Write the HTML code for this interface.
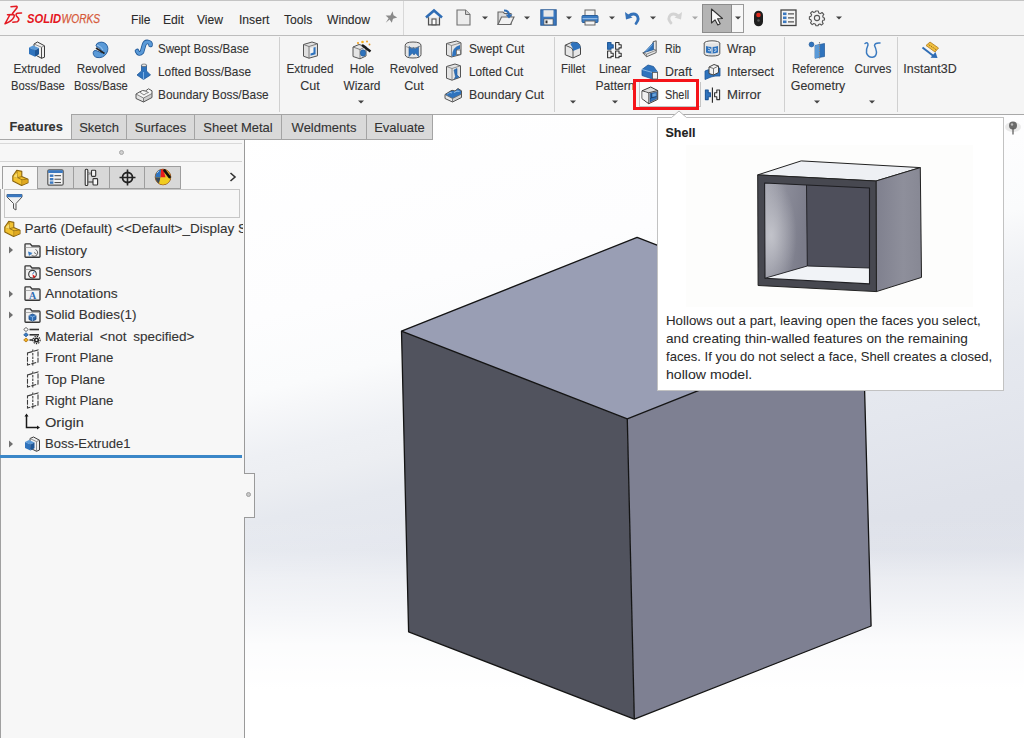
<!DOCTYPE html>
<html><head><meta charset="utf-8"><style>*{margin:0;padding:0;box-sizing:border-box}
html,body{width:1024px;height:738px;overflow:hidden;background:#f3f3f3;font-family:"Liberation Sans",sans-serif;color:#333}
.a{position:absolute}
.t{position:absolute;white-space:nowrap;line-height:1;-webkit-text-stroke:0.1px currentColor}
svg{overflow:visible}
</style></head><body>
<div class="a" style="left:0px;top:0px;width:1024px;height:738px;background:#f5f5f5"></div>
<div class="a" style="left:0px;top:0px;width:1024px;height:1px;background:#c4c4c4"></div>
<div class="a" style="left:0px;top:35px;width:1024px;height:1px;background:#bdbdbd"></div>
<div class="a" style="left:71px;top:114px;width:953px;height:1px;background:#a8a8a8"></div>
<div class="a" style="left:245px;top:115px;width:779px;height:623px;background:linear-gradient(to bottom,rgba(255,255,255,0) 400px,rgba(255,255,255,0.08) 435px,rgba(255,255,255,0.42) 465px,rgba(255,255,255,0.52) 480px,rgba(255,255,255,0.9) 530px,#fff 575px),linear-gradient(166.5deg,#fff 0px,#fdfdfe 200px,#fafbfc 272px,#f6f7f9 293px,#eef0f4 335px,#eceef2 364px,#e6e9ef 398px,#e4e7ee 443px,#dfe2ea 540px,#dcdfe8 788px)"></div>
<div class="t" style="left:131px;top:13.68px;font-size:12.9px;transform:scaleX(0.94);transform-origin:0 0;color:#2a2a2a;">File</div>
<div class="t" style="left:163px;top:13.68px;font-size:12.9px;transform:scaleX(0.94);transform-origin:0 0;color:#2a2a2a;">Edit</div>
<div class="t" style="left:197px;top:13.68px;font-size:12.9px;transform:scaleX(0.94);transform-origin:0 0;color:#2a2a2a;">View</div>
<div class="t" style="left:238.5px;top:13.68px;font-size:12.9px;transform:scaleX(0.94);transform-origin:0 0;color:#2a2a2a;">Insert</div>
<div class="t" style="left:284px;top:13.68px;font-size:12.9px;transform:scaleX(0.94);transform-origin:0 0;color:#2a2a2a;">Tools</div>
<div class="t" style="left:326.5px;top:13.68px;font-size:12.9px;transform:scaleX(0.94);transform-origin:0 0;color:#2a2a2a;">Window</div>
<div class="a" style="left:403px;top:1px;width:1px;height:34px;background:#d8d8d8"></div>
<div class="t" style="left:-63px;width:200px;text-align:center;top:63.16px;font-size:12.8px;transform:scaleX(0.918);color:#333;">Extruded</div>
<div class="t" style="left:-62.5px;width:200px;text-align:center;top:80.06px;font-size:12.8px;transform:scaleX(0.879);color:#333;">Boss/Base</div>
<div class="t" style="left:1px;width:200px;text-align:center;top:63.16px;font-size:12.8px;transform:scaleX(0.908);color:#333;">Revolved</div>
<div class="t" style="left:1px;width:200px;text-align:center;top:80.06px;font-size:12.8px;transform:scaleX(0.879);color:#333;">Boss/Base</div>
<div class="t" style="left:158px;top:43.36px;font-size:12.8px;transform:scaleX(0.907);transform-origin:0 0;color:#333;">Swept Boss/Base</div>
<div class="t" style="left:158px;top:65.96px;font-size:12.8px;transform:scaleX(0.927);transform-origin:0 0;color:#333;">Lofted Boss/Base</div>
<div class="t" style="left:158px;top:88.96px;font-size:12.8px;transform:scaleX(0.926);transform-origin:0 0;color:#333;">Boundary Boss/Base</div>
<div class="a" style="left:279px;top:37px;width:1px;height:75px;background:#d0d0d0"></div>
<div class="t" style="left:209.5px;width:200px;text-align:center;top:63.16px;font-size:12.8px;transform:scaleX(0.918);color:#333;">Extruded</div>
<div class="t" style="left:209.5px;width:200px;text-align:center;top:80.06px;font-size:12.8px;transform:scaleX(0.98);color:#333;">Cut</div>
<div class="t" style="left:261.5px;width:200px;text-align:center;top:63.16px;font-size:12.8px;transform:scaleX(0.922);color:#333;">Hole</div>
<div class="t" style="left:261.5px;width:200px;text-align:center;top:80.06px;font-size:12.8px;transform:scaleX(0.927);color:#333;">Wizard</div>
<svg class="a" style="left:358px;top:100px" width="6" height="4" viewBox="0 0 6 4"><path d="M0 0.5H6L3 3.5Z" fill="#444"/></svg>
<div class="t" style="left:313.5px;width:200px;text-align:center;top:63.16px;font-size:12.8px;transform:scaleX(0.908);color:#333;">Revolved</div>
<div class="t" style="left:313.5px;width:200px;text-align:center;top:80.06px;font-size:12.8px;transform:scaleX(0.98);color:#333;">Cut</div>
<div class="t" style="left:468.5px;top:43.36px;font-size:12.8px;transform:scaleX(0.937);transform-origin:0 0;color:#333;">Swept Cut</div>
<div class="t" style="left:468.5px;top:65.96px;font-size:12.8px;transform:scaleX(0.92);transform-origin:0 0;color:#333;">Lofted Cut</div>
<div class="t" style="left:468.5px;top:88.96px;font-size:12.8px;transform:scaleX(0.958);transform-origin:0 0;color:#333;">Boundary Cut</div>
<div class="a" style="left:554px;top:37px;width:1px;height:75px;background:#d0d0d0"></div>
<div class="t" style="left:473px;width:200px;text-align:center;top:63.16px;font-size:12.8px;transform:scaleX(0.896);color:#333;">Fillet</div>
<svg class="a" style="left:569.5px;top:100px" width="6" height="4" viewBox="0 0 6 4"><path d="M0 0.5H6L3 3.5Z" fill="#444"/></svg>
<div class="t" style="left:514.5px;width:200px;text-align:center;top:63.16px;font-size:12.8px;transform:scaleX(0.904);color:#333;">Linear</div>
<div class="t" style="left:514.5px;width:200px;text-align:center;top:80.06px;font-size:12.8px;transform:scaleX(0.944);color:#333;">Pattern</div>
<svg class="a" style="left:611.5px;top:100px" width="6" height="4" viewBox="0 0 6 4"><path d="M0 0.5H6L3 3.5Z" fill="#444"/></svg>
<div class="t" style="left:665px;top:43.36px;font-size:12.8px;transform:scaleX(0.833);transform-origin:0 0;color:#333;">Rib</div>
<div class="t" style="left:665px;top:65.96px;font-size:12.8px;transform:scaleX(0.968);transform-origin:0 0;color:#333;">Draft</div>
<div class="t" style="left:727px;top:43.36px;font-size:12.8px;transform:scaleX(0.951);transform-origin:0 0;color:#333;">Wrap</div>
<div class="t" style="left:727px;top:65.96px;font-size:12.8px;transform:scaleX(0.955);transform-origin:0 0;color:#333;">Intersect</div>
<div class="t" style="left:727px;top:88.96px;font-size:12.8px;transform:scaleX(1.024);transform-origin:0 0;color:#333;">Mirror</div>
<div class="a" style="left:784px;top:37px;width:1px;height:75px;background:#d0d0d0"></div>
<div class="t" style="left:717.5px;width:200px;text-align:center;top:63.16px;font-size:12.8px;transform:scaleX(0.883);color:#333;">Reference</div>
<div class="t" style="left:717.5px;width:200px;text-align:center;top:80.06px;font-size:12.8px;transform:scaleX(0.97);color:#333;">Geometry</div>
<svg class="a" style="left:814px;top:100px" width="6" height="4" viewBox="0 0 6 4"><path d="M0 0.5H6L3 3.5Z" fill="#444"/></svg>
<div class="t" style="left:772.5px;width:200px;text-align:center;top:63.16px;font-size:12.8px;transform:scaleX(0.909);color:#333;">Curves</div>
<svg class="a" style="left:869px;top:100px" width="6" height="4" viewBox="0 0 6 4"><path d="M0 0.5H6L3 3.5Z" fill="#444"/></svg>
<div class="a" style="left:897px;top:37px;width:1px;height:75px;background:#d0d0d0"></div>
<div class="t" style="left:830px;width:200px;text-align:center;top:63.16px;font-size:12.8px;transform:scaleX(0.974);color:#333;">Instant3D</div>
<div class="a" style="left:639px;top:82px;width:62px;height:25px;border:1px solid #c4c4c4;border-top:none;background:#fdfdfd"></div>
<div class="a" style="left:633px;top:79px;width:66px;height:31px;border:3px solid #f5141a;background:transparent"></div>
<div class="t" style="left:665px;top:88.96px;font-size:12.8px;transform:scaleX(0.853);transform-origin:0 0;color:#333;">Shell</div>
<div class="a" style="left:0px;top:139px;width:245px;height:1px;background:#a8a8a8"></div>
<div class="t" style="left:9.5px;top:121.06px;font-size:12.8px;font-weight:700;color:#333;">Features</div>
<div class="a" style="left:71px;top:114px;width:56px;height:26px;background:#d9d9d9;border:1px solid #a4a4a4"></div>
<div class="t" style="left:-1.0px;width:200px;text-align:center;top:120.89px;font-size:13px;color:#333;">Sketch</div>
<div class="a" style="left:126px;top:114px;width:69px;height:26px;background:#d9d9d9;border:1px solid #a4a4a4"></div>
<div class="t" style="left:60.5px;width:200px;text-align:center;top:120.89px;font-size:13px;color:#333;">Surfaces</div>
<div class="a" style="left:194px;top:114px;width:88px;height:26px;background:#d9d9d9;border:1px solid #a4a4a4"></div>
<div class="t" style="left:138.0px;width:200px;text-align:center;top:120.89px;font-size:13px;color:#333;">Sheet Metal</div>
<div class="a" style="left:281px;top:114px;width:86px;height:26px;background:#d9d9d9;border:1px solid #a4a4a4"></div>
<div class="t" style="left:224.0px;width:200px;text-align:center;top:120.89px;font-size:13px;color:#333;">Weldments</div>
<div class="a" style="left:366px;top:114px;width:67px;height:26px;background:#d9d9d9;border:1px solid #a4a4a4"></div>
<div class="t" style="left:299.5px;width:200px;text-align:center;top:120.89px;font-size:13px;color:#333;">Evaluate</div>
<div class="a" style="left:0px;top:140px;width:244px;height:598px;background:#f7f7f7"></div>
<div class="a" style="left:244px;top:139px;width:1px;height:599px;background:#9a9a9a"></div>
<div class="a" style="left:0px;top:143px;width:242px;height:1px;background:#d9d9d9"></div>
<div class="a" style="left:0px;top:161px;width:242px;height:1px;background:#d4d4d4"></div>
<div class="a" style="left:118.5px;top:149.5px;width:5px;height:5px;border-radius:50%;background:#d0d0d0;border:1px solid #a8a8a8"></div>
<div class="a" style="left:2px;top:166px;width:178px;height:1px;background:#9e9e9e"></div>
<div class="a" style="left:37px;top:166px;width:37px;height:23px;background:#d8d8d8;border:1px solid #9e9e9e"></div>
<div class="a" style="left:73px;top:166px;width:37px;height:23px;background:#d8d8d8;border:1px solid #9e9e9e"></div>
<div class="a" style="left:109px;top:166px;width:37px;height:23px;background:#d8d8d8;border:1px solid #9e9e9e"></div>
<div class="a" style="left:144px;top:166px;width:37px;height:23px;background:#d8d8d8;border:1px solid #9e9e9e"></div>
<div class="a" style="left:2px;top:166px;width:1px;height:23px;background:#9e9e9e"></div>
<div class="a" style="left:37px;top:188px;width:144px;height:1px;background:#9e9e9e"></div>
<svg class="a" style="left:229px;top:172px" width="8" height="10" viewBox="0 0 8 10"><path d="M1.5 1L6 5L1.5 9" fill="none" stroke="#333" stroke-width="1.6"/></svg>
<div class="a" style="left:4px;top:189px;width:236px;height:29px;border:1px solid #c6c6c6;background:#f7f7f7"></div>
<div class="a" style="left:0px;top:189px;width:1px;height:549px;background:#a0a0a0"></div>
<div class="t" style="left:24.5px;top:222.37px;font-size:13.5px;color:#333;width:218px;height:16px;overflow:hidden">Part6 (Default) &lt;&lt;Default&gt;_Display States</div>
<div class="t" style="left:45px;top:243.77px;font-size:13.5px;transform:scaleX(1);transform-origin:0 0;color:#333;">History</div>
<div class="t" style="left:45px;top:265.27px;font-size:13.5px;transform:scaleX(0.94);transform-origin:0 0;color:#333;">Sensors</div>
<div class="t" style="left:45px;top:286.77px;font-size:13.5px;transform:scaleX(1.02);transform-origin:0 0;color:#333;">Annotations</div>
<div class="t" style="left:45px;top:308.27px;font-size:13.5px;transform:scaleX(1);transform-origin:0 0;color:#333;">Solid Bodies(1)</div>
<div class="t" style="left:45px;top:329.77px;font-size:13.5px;transform:scaleX(1);transform-origin:0 0;color:#333;word-spacing:3px">Material &lt;not specified&gt;</div>
<div class="t" style="left:45px;top:351.27px;font-size:13.5px;transform:scaleX(0.98);transform-origin:0 0;color:#333;">Front Plane</div>
<div class="t" style="left:45px;top:372.77px;font-size:13.5px;transform:scaleX(1);transform-origin:0 0;color:#333;">Top Plane</div>
<div class="t" style="left:45px;top:394.27px;font-size:13.5px;transform:scaleX(0.98);transform-origin:0 0;color:#333;">Right Plane</div>
<div class="t" style="left:45px;top:415.77px;font-size:13.5px;transform:scaleX(1.08);transform-origin:0 0;color:#333;">Origin</div>
<div class="t" style="left:45px;top:437.27px;font-size:13.5px;transform:scaleX(0.965);transform-origin:0 0;color:#333;">Boss-Extrude1</div>
<div class="a" style="left:0px;top:455px;width:242px;height:3px;background:#3b87c8"></div>
<div class="a" style="left:244px;top:473px;width:11px;height:45px;background:#f7f7f7;border:1px solid #9a9a9a;border-left:none"></div>
<div class="a" style="left:246px;top:492px;width:5px;height:5px;border-radius:50%;background:#c8c8c8;border:1px solid #a0a0a0"></div>
<svg class="a" style="left:245px;top:115px" width="779" height="623" viewBox="0 0 779 623">
<polygon points="156.5,216.1 392.1,122.35 617.8,210.15 382.3,303.9" fill="#999eb4"/>
<polygon points="156.5,216.1 382.3,303.9 389.3,604.1 163.6,516.8" fill="#51535e"/>
<polygon points="382.3,303.9 617.8,210.15 626.1,511 389.3,604.1" fill="#7e8092"/>
<g fill="none" stroke="#141414" stroke-width="1.3" stroke-linejoin="round">
<polygon points="156.5,216.1 392.1,122.35 617.8,210.15 626.1,511 389.3,604.1 163.6,516.8"/>
<polyline points="156.5,216.1 382.3,303.9 617.8,210.15"/>
<line x1="382.3" y1="303.9" x2="389.3" y2="604.1"/>
</g></svg>
<div class="a" style="left:657px;top:117px;width:347px;height:274px;background:#fff;border:1px solid #c2c2c2"></div>
<svg class="a" style="left:671px;top:110px" width="16" height="9" viewBox="0 0 16 9"><path d="M0 8 L8 1 L16 8" fill="#fff" stroke="#b8b8b8" stroke-width="1"/><rect x="0.5" y="7.5" width="15" height="2" fill="#fff"/></svg>
<div class="t" style="left:665.5px;top:126.92px;font-size:12.5px;font-weight:700;color:#222;">Shell</div>
<div class="a" style="left:686px;top:145px;width:287px;height:162px;background:#fdfdfc"></div>
<div class="t" style="left:665.8px;top:314.07px;font-size:13.5px;transform:scaleX(0.987);transform-origin:0 0;color:#2a2a2a;-webkit-text-stroke:0.05px">Hollows out a part, leaving open the faces you select,</div>
<div class="t" style="left:665.8px;top:332.07px;font-size:13.5px;transform:scaleX(1.008);transform-origin:0 0;color:#2a2a2a;-webkit-text-stroke:0.05px">and creating thin-walled features on the remaining</div>
<div class="t" style="left:665.8px;top:349.87px;font-size:13.5px;transform:scaleX(0.968);transform-origin:0 0;color:#2a2a2a;-webkit-text-stroke:0.05px">faces. If you do not select a face, Shell creates a closed,</div>
<div class="t" style="left:665.8px;top:367.57px;font-size:13.5px;transform:scaleX(1.045);transform-origin:0 0;color:#2a2a2a;-webkit-text-stroke:0.05px">hollow model.</div>
<svg class="a" style="left:3px;top:5px" width="21" height="21" viewBox="0 0 21 21"><g fill="none" stroke="#e41b23" stroke-width="1.55" stroke-linecap="round" stroke-linejoin="round">
<path d="M8 1.8 L13.6 1.3 Q14.6 1.6 13.8 3 L9.5 8.5"/>
<path d="M4.5 9.8 L10.2 9.6 Q12 10 10.8 12.4 Q9 16 2 18.8 L6.5 10.5"/>
<path d="M18.5 8 L14.5 8.3 Q12.2 9 13.5 11 L15.6 13.6 Q16.4 15.6 14.2 16.8 L9.8 17.2"/>
</g></svg>
<svg class="a" style="left:27px;top:11px" width="75" height="14" viewBox="0 0 75 14"><text x="0" y="12" font-family="Liberation Sans" font-weight="700" font-style="italic" font-size="12.3" fill="#e4161e" textLength="34.2" lengthAdjust="spacingAndGlyphs">SOLID</text><text x="34.6" y="12" font-family="Liberation Sans" font-style="italic" font-size="12.3" fill="#d65a3a" textLength="38.5" lengthAdjust="spacingAndGlyphs" stroke="#d65a3a" stroke-width="0.25">WORKS</text></svg>
<svg class="a" style="left:384px;top:10px" width="14" height="14" viewBox="0 0 14 14"><path d="M8.6 1.2 L9.5 5.2 L13.2 7.4 L9 8.8 L7.8 12.8 L5.6 9.6 L1.8 12.8 L4.6 8.2 L1.6 5.4 L6.4 5.6 Z" fill="#8a8a8a"/></svg>
<svg class="a" style="left:425px;top:9px" width="18" height="17" viewBox="0 0 18 17"><path d="M1 8.5 L9 1.5 L17 8.5" fill="none" stroke="#2f6db5" stroke-width="2.6" stroke-linejoin="miter"/>
<path d="M3.5 8.3 V15.8 H14.5 V8.3" fill="#e8e8e8" stroke="#505050" stroke-width="1.2"/>
<rect x="7" y="10" width="4" height="5.8" fill="#fff" stroke="#505050" stroke-width="1.1"/></svg>
<svg class="a" style="left:456px;top:9px" width="15" height="17" viewBox="0 0 15 17"><path d="M1 1 H9.5 L14 5.5 V16 H1 Z" fill="#ececec" stroke="#707070" stroke-width="1.1"/><path d="M9.5 1 V5.5 H14" fill="#d0d0d0" stroke="#707070" stroke-width="1"/></svg>
<svg class="a" style="left:481.5px;top:15.5px" width="6" height="4" viewBox="0 0 6 4"><path d="M0 0.5H6L3 3.5Z" fill="#444"/></svg>
<svg class="a" style="left:497px;top:9px" width="18" height="17" viewBox="0 0 18 17"><path d="M1 3 H6 L7.5 4.5 H14 V15.5 H1 Z" fill="#dcdcdc" stroke="#666" stroke-width="1.1"/>
<path d="M1 15.5 L4.5 8 H17 L13.5 15.5 Z" fill="#f2f2f2" stroke="#666" stroke-width="1.1"/>
<path d="M7 1.5 Q12 1.5 12 6" fill="none" stroke="#2f6db5" stroke-width="2"/><path d="M8.5 5.5 H15.5 L12 9.5 Z" fill="#2f6db5"/></svg>
<svg class="a" style="left:524px;top:15.5px" width="6" height="4" viewBox="0 0 6 4"><path d="M0 0.5H6L3 3.5Z" fill="#444"/></svg>
<svg class="a" style="left:540px;top:9px" width="17" height="17" viewBox="0 0 17 17"><rect x="0.8" y="0.8" width="15.4" height="15.4" fill="#3a78c0" stroke="#2a5a95" stroke-width="1"/>
<rect x="3.5" y="1.2" width="10" height="6.5" fill="#e8e8e8"/>
<rect x="4" y="10" width="9" height="5.8" fill="#f4f4f4" stroke="#555" stroke-width="0.6"/><rect x="5.5" y="11.5" width="2" height="2.8" fill="#333"/></svg>
<svg class="a" style="left:566px;top:15.5px" width="6" height="4" viewBox="0 0 6 4"><path d="M0 0.5H6L3 3.5Z" fill="#444"/></svg>
<svg class="a" style="left:581px;top:9px" width="18" height="17" viewBox="0 0 18 17"><rect x="4" y="1" width="10" height="6" fill="#f2f2f2" stroke="#666" stroke-width="1"/>
<rect x="1" y="6.5" width="16" height="7" rx="1" fill="#3a7cc4" stroke="#2a5e9a" stroke-width="1"/>
<rect x="1.5" y="9" width="15" height="1.2" fill="#8fb8e4"/>
<rect x="4" y="12" width="10" height="4" fill="#f4f4f4" stroke="#666" stroke-width="1"/></svg>
<svg class="a" style="left:608.5px;top:15.5px" width="6" height="4" viewBox="0 0 6 4"><path d="M0 0.5H6L3 3.5Z" fill="#444"/></svg>
<svg class="a" style="left:624px;top:10px" width="17" height="15" viewBox="0 0 17 15"><path d="M4.5 6 Q9 2.5 12.5 5 Q16 8.5 12 13.5" fill="none" stroke="#3572b9" stroke-width="2.8" stroke-linecap="round"/><path d="M1 2 L2 9.5 L8.5 7.5 Z" fill="#3572b9"/></svg>
<svg class="a" style="left:649.7px;top:15.5px" width="6" height="4" viewBox="0 0 6 4"><path d="M0 0.5H6L3 3.5Z" fill="#444"/></svg>
<svg class="a" style="left:666px;top:10px" width="17" height="15" viewBox="0 0 17 15"><path d="M12.5 6 Q8 2.5 4.5 5 Q1 8.5 5 13" fill="none" stroke="#d3d3d3" stroke-width="2.8" stroke-linecap="round"/><path d="M16 2 L15 9.5 L8.5 7.5 Z" fill="#d3d3d3"/></svg>
<svg class="a" style="left:692.4px;top:15.5px" width="6" height="4" viewBox="0 0 6 4"><path d="M0 0.5H6L3 3.5Z" fill="#a8a8a8"/></svg>
<div class="a" style="left:702px;top:4px;width:42px;height:29px;background:#f7f7f7;border:1px solid #9a9a9a"></div>
<div class="a" style="left:702px;top:4px;width:30px;height:29px;background:#b4b4b4;border:1px solid #8c8c8c"></div>
<svg class="a" style="left:710px;top:8px" width="14" height="18" viewBox="0 0 14 18"><path d="M1.5 1 V15 L5 11.8 L7.8 17 L10.2 15.8 L7.6 10.8 L12.5 10.5 Z" fill="#f8f8f8" stroke="#333" stroke-width="1.1" stroke-linejoin="round"/></svg>
<svg class="a" style="left:734.5px;top:15.5px" width="6" height="4" viewBox="0 0 6 4"><path d="M0 0.5H6L3 3.5Z" fill="#444"/></svg>
<svg class="a" style="left:753px;top:10px" width="11" height="17" viewBox="0 0 11 17"><rect x="1" y="0.8" width="9" height="15.4" rx="4.5" fill="#1e1e1e"/><circle cx="5.5" cy="5" r="2.3" fill="#e02a1e"/><circle cx="5.5" cy="10.5" r="1.3" fill="#555"/></svg>
<svg class="a" style="left:780px;top:9px" width="17" height="17" viewBox="0 0 17 17"><rect x="1" y="1" width="15" height="15.5" fill="#f4f4f4" stroke="#444" stroke-width="1.3"/>
<rect x="3" y="3.5" width="3.5" height="2.6" fill="#3a78c0"/><rect x="3" y="7.5" width="3.5" height="2.6" fill="#3a78c0"/><rect x="3" y="11.5" width="3.5" height="2.6" fill="#3a78c0"/>
<path d="M8 4.8 H14 M8 8.8 H14 M8 12.8 H14" stroke="#555" stroke-width="1.2"/></svg>
<svg class="a" style="left:809px;top:10px" width="16" height="16" viewBox="0 0 16 16"><g transform="translate(8 8)"><path d="M-1.3 -7 H1.3 L1.7 -5.1 L3.4 -4.4 L5 -5.5 L6.8 -3.6 L5.7 -2 L6.3 -0.3 L7.5 0 V2 L5.9 2.2 L5.3 4 L6.2 5.5 L4.4 7.1 L3 6 L1.4 6.6 L1.2 7.7 H-1.2 L-1.5 6.2 L-3.2 5.5 L-4.8 6.6 L-6.5 4.8 L-5.5 3.2 L-6.2 1.6 L-7.6 1.3 V-1.2 L-6.1 -1.6 L-5.4 -3.3 L-6.5 -4.8 L-4.7 -6.6 L-3.2 -5.5 L-1.6 -6.2 Z" fill="#f2f2f2" stroke="#555" stroke-width="1.1" stroke-linejoin="round"/><circle r="2.6" fill="#f2f2f2" stroke="#555" stroke-width="1.1"/></g></svg>
<svg class="a" style="left:835.5px;top:15.5px" width="6" height="4" viewBox="0 0 6 4"><path d="M0 0.5H6L3 3.5Z" fill="#444"/></svg>
<svg class="a" style="left:28px;top:41px" width="18" height="18" viewBox="0 0 18 18"><path d="M6 3 L9.5 1 L16.5 4.8 V16.2 L13.5 17.3 L6 13.2 Z" fill="#f0f0f0" stroke="#3a3a3a" stroke-width="1"/>
<path d="M13.5 6.2 V17.3" stroke="#3a3a3a" stroke-width="0.9"/><path d="M6 3 L13.5 6.2 L16.5 4.8" fill="none" stroke="#777" stroke-width="0.8"/>
<path d="M1 6.5 L5 4.5 L11 7 L7 9.2 Z" fill="#5a9ad8"/><path d="M1 6.5 L7 9.2 V15.8 L1 13 Z" fill="#2f73bd"/><path d="M7 9.2 L11 7 V13.3 L7 15.8 Z" fill="#1f5797"/></svg>
<svg class="a" style="left:92px;top:41px" width="17" height="18" viewBox="0 0 17 18"><path d="M5 2.5 Q10 -0.5 14 3 Q17.5 7 14.5 12.5 Q11 17.5 5 16.5 Q1 15.5 1.2 11.5 Q1.5 9 4 9.5 L10 12 Q8 6 5 6 Q3 4.5 5 2.5 Z" fill="#5a9ad8" stroke="#1f5797" stroke-width="0.9"/>
<path d="M4 7 L12.5 12.5" stroke="#222" stroke-width="1.6"/><path d="M5 4 Q9 5 11 9" fill="none" stroke="#9cc6ee" stroke-width="1"/></svg>
<svg class="a" style="left:135px;top:40px" width="18" height="17" viewBox="0 0 18 17"><path d="M2 11 Q4 15.5 7 12 L9 5 Q10 1.5 13 2 Q16 2.5 15.5 5" fill="none" stroke="#1f5797" stroke-width="4.6" stroke-linecap="round"/><path d="M2 11 Q4 15.5 7 12 L9 5 Q10 1.5 13 2 Q16 2.5 15.5 5" fill="none" stroke="#5a9ad8" stroke-width="3" stroke-linecap="round"/></svg>
<svg class="a" style="left:136px;top:63px" width="16" height="17" viewBox="0 0 16 17"><path d="M5.5 2 V8 L1 12 L7.5 16.5 L14.5 12 L10.5 8 V2 Z" fill="#2f73bd" stroke="#1f5797" stroke-width="0.8"/><ellipse cx="8" cy="2.3" rx="2.6" ry="1.3" fill="#e8e8e8" stroke="#666" stroke-width="0.7"/><path d="M7.5 16.5 V9" stroke="#7fb2e6" stroke-width="1"/></svg>
<svg class="a" style="left:135px;top:86px" width="18" height="17" viewBox="0 0 18 17"><path d="M1 8 L8.5 12 V16 L1 12.5 Z" fill="#e4e4e4"/><path d="M8.5 12 L17 7.5 V11.5 L8.5 16 Z" fill="#cfcfcf"/>
<path d="M1 8 L4.5 6 Q7.5 3.5 10.5 5 L13.5 2.8 L17 4.8 V7.5 L8.5 12 Z" fill="#f6f6f6"/>
<path d="M1 8 L4.5 6 Q7.5 3.5 10.5 5 L13.5 2.8 L17 4.8 V11.5 L8.5 16 L1 12.5 Z" fill="none" stroke="#555" stroke-width="1" stroke-linejoin="round"/>
<path d="M1 8 L8.5 12 L17 7.5 M8.5 12 V16 M4.5 6 L9 9 Q11 7 13.5 6.5 M10.5 5 L13.5 6.5" fill="none" stroke="#666" stroke-width="0.8"/></svg>
<svg class="a" style="left:302px;top:41px" width="17" height="18" viewBox="0 0 17 18"><path d="M1.5 3.5 L10 1 L15.5 2.8 V14.8 L7 17.2 L1.5 15.2 Z" fill="#e0e0e0" stroke="#555" stroke-width="1"/>
<path d="M1.5 3.5 L7 5.5 L15.5 2.8 M7 5.5 V17.2" fill="none" stroke="#666" stroke-width="0.8"/>
<path d="M8.2 7.2 L14 5.6 V13.6 L8.2 15.4 Z" fill="#f4f4f4"/><path d="M11.5 6.5 V11.5 L8.5 12.5 V14.8 L13.6 13.3 V6 Z" fill="#2f73bd"/></svg>
<svg class="a" style="left:352px;top:40px" width="20" height="20" viewBox="0 0 20 20"><path d="M1 7 L7 4.5 L14 6.5 V16 L8 18.8 L1 16.5 Z" fill="#e4e4e4" stroke="#555" stroke-width="1"/>
<path d="M1 7 L8 9.5 L14 6.5 M8 9.5 V18.8" fill="none" stroke="#666" stroke-width="0.8"/>
<ellipse cx="11" cy="13" rx="2.6" ry="3.2" fill="#2f73bd" stroke="#1f5797" stroke-width="0.6"/>
<path d="M10 5 L18.5 11.5" stroke="#1a1a1a" stroke-width="2.4"/>
<circle cx="6" cy="3" r="1.1" fill="#f0a020"/><circle cx="10.5" cy="2" r="1.3" fill="#f5b020"/><circle cx="15" cy="1.6" r="1" fill="#f0a020"/><circle cx="17.5" cy="4.5" r="0.9" fill="#e89018"/></svg>
<svg class="a" style="left:404px;top:41px" width="19" height="18" viewBox="0 0 19 18"><path d="M1.2 4.5 Q1.2 1 9 1 Q17 1 17 4.5 V13.5 Q17 17 9 17 Q1.2 17 1.2 13.5 Z" fill="#e6e6e6" stroke="#555" stroke-width="1"/>
<path d="M5 5.5 L8 7.5 L9.5 6.5 L11 8 L14.5 5.5 V15.5 L11.5 12 L10 14 L8.5 12 L5 15.5 Z" fill="#2f73bd" stroke="#1f5797" stroke-width="0.6"/>
<path d="M1.2 4.5 Q3 7 9 7 Q15 7 17 4.5" fill="none" stroke="#777" stroke-width="0.7"/></svg>
<svg class="a" style="left:445px;top:40px" width="18" height="18" viewBox="0 0 18 18"><path d="M1.5 3.5 L11.5 1 L16 2.8 V14.5 L6.5 17 L1.5 15 Z" fill="#e4e4e4" stroke="#555" stroke-width="1"/>
<path d="M1.5 3.5 L6.5 5.5 L16 2.8 M6.5 5.5 V17" fill="none" stroke="#777" stroke-width="0.8"/>
<path d="M7 16.5 Q7 7 15 5 V9 Q12 9.5 11 11 V15.5 Z" fill="#2f73bd"/><rect x="11.5" y="10" width="3.8" height="4.6" fill="#f6f6f6" stroke="#555" stroke-width="0.7"/></svg>
<svg class="a" style="left:445px;top:63px" width="18" height="18" viewBox="0 0 18 18"><path d="M1.5 3.5 L10 1 L15.5 2.8 V14.2 L7 17.2 L1.5 15.2 Z" fill="#e4e4e4" stroke="#555" stroke-width="1"/>
<path d="M1.5 3.5 L7 5.5 L15.5 2.8 M7 5.5 V17.2" fill="none" stroke="#777" stroke-width="0.8"/>
<path d="M9 7 L12 5.5 V12 L14 14 L9.5 15.8 L10.5 13.5 Z" fill="#2f73bd" stroke="#1f5797" stroke-width="0.6"/></svg>
<svg class="a" style="left:444px;top:86px" width="19" height="17" viewBox="0 0 19 17"><path d="M1 8.5 L8.5 12.5 V16 L1 12.5 Z" fill="#e8e8e8"/><path d="M8.5 12.5 L17.5 8 V11.5 L8.5 16 Z" fill="#d2d2d2"/>
<path d="M1 8.5 L5 6 Q8 3 11 5 L14 2.5 L17.5 4.8 V8 L8.5 12.5 Z" fill="#2f73bd"/>
<path d="M3 8 Q6 5.5 8 7 M10 6.5 Q13 4.5 15.5 5.5" fill="none" stroke="#8cbbe8" stroke-width="1.1"/>
<path d="M1 8.5 L5 6 Q8 3 11 5 L14 2.5 L17.5 4.8 V11.5 L8.5 16 L1 12.5 Z" fill="none" stroke="#555" stroke-width="1" stroke-linejoin="round"/>
<path d="M1 8.5 L8.5 12.5 L17.5 8 M8.5 12.5 V16" fill="none" stroke="#666" stroke-width="0.8"/></svg>
<svg class="a" style="left:564px;top:41px" width="18" height="18" viewBox="0 0 18 18"><path d="M1.2 4.2 L8 1.2 L13 1.5 Q16.5 3 16.5 7 V13.5 L9 17 L1.2 13.8 Z" fill="#e6e6e6" stroke="#444" stroke-width="1"/>
<path d="M8 1.2 L13 1.5 Q16.5 3 16.5 7 L9 10 Q9 6 6.5 3.5 Z" fill="#2f73bd"/>
<path d="M1.2 4.2 L6.5 6.5 Q9 7.5 9 10 V17" fill="none" stroke="#444" stroke-width="0.9"/></svg>
<svg class="a" style="left:606px;top:41px" width="17" height="18" viewBox="0 0 17 18"><path d="M1.6 1.5 h3.4 v2.2 h2.2 v3.2 h-2.2 v1.4 h-3.4 z" fill="#2f73bd" stroke="#1f5797" stroke-width="1.1" stroke-linejoin="round"/><path d="M9.6 1.5 h3.4 v2.2 h2.2 v3.2 h-2.2 v1.4 h-3.4 z" fill="#f6f6f6" stroke="#333" stroke-width="1.1" stroke-linejoin="round"/><path d="M1.6 10 h3.4 v2.2 h2.2 v3.2 h-2.2 v1.4 h-3.4 z" fill="#f6f6f6" stroke="#333" stroke-width="1.1" stroke-linejoin="round"/><path d="M9.6 10 h3.4 v2.2 h2.2 v3.2 h-2.2 v1.4 h-3.4 z" fill="#f6f6f6" stroke="#333" stroke-width="1.1" stroke-linejoin="round"/></svg>
<svg class="a" style="left:642px;top:40px" width="16" height="18" viewBox="0 0 16 18"><path d="M0.8 12.8 L11 9 L11 1.8 L14.2 0.8 V12.6 L4.5 16.8 Z" fill="#e6e6e6" stroke="#555" stroke-width="0.9" stroke-linejoin="round"/>
<path d="M0.8 12.8 L4.5 14.2 L14.2 10.2 M4.5 14.2 V16.8 M11 9 L14.2 10.2" fill="none" stroke="#666" stroke-width="0.7"/>
<path d="M2.2 12.4 L11.4 2.6 V9.8 Z" fill="#2f73bd" stroke="#1f5797" stroke-width="0.6"/><path d="M4 11.5 L10.5 4.5" stroke="#8cbbe8" stroke-width="0.8"/></svg>
<svg class="a" style="left:641px;top:64px" width="18" height="16" viewBox="0 0 18 16"><path d="M1 5.5 L7 1 L12.5 2.5 L16.5 8 V14.5 L11.5 15 L1 11.5 Z" fill="#2f73bd" stroke="#1f5797" stroke-width="0.8"/>
<path d="M1 5.5 L11.5 8.5 L16.5 8" fill="none" stroke="#9cc6ee" stroke-width="0.8"/>
<rect x="11.5" y="8.5" width="5" height="6.5" fill="#f4f4f4" stroke="#555" stroke-width="0.8"/></svg>
<svg class="a" style="left:641px;top:86px" width="18" height="19" viewBox="0 0 18 19"><path d="M1 4.8 L9.7 1 L16.7 4.5 V13.4 L7.7 17.7 L1 12.7 Z" fill="#dedede" stroke="#3a3a3a" stroke-width="1" stroke-linejoin="round"/>
<path d="M1 4.8 L7.7 6.8 L16.7 4.5 M7.7 6.8 V17.7" fill="none" stroke="#3a3a3a" stroke-width="0.9"/>
<path d="M1.5 5.5 L7.2 7.3 V16.6 L1.5 12.4 Z" fill="#f0f0f0"/>
<path d="M9 7.6 L15.6 5.9 V12.8 L9 15.9 Z" fill="#2f73bd" stroke="#234a7a" stroke-width="0.6"/>
<path d="M10.6 7.2 V11.8 L9 13.2 M10.6 11.8 L15.6 10.6" fill="none" stroke="#1a3050" stroke-width="0.7"/><path d="M11.5 8 L14.8 7.2 V10 L11.5 10.8 Z" fill="#6aa4dc"/></svg>
<svg class="a" style="left:703px;top:40px" width="18" height="17" viewBox="0 0 18 17"><ellipse cx="9" cy="3.2" rx="7.8" ry="2.4" fill="#f2f2f2" stroke="#555" stroke-width="1"/>
<path d="M1.2 3.2 V13.5 Q1.2 16 9 16 Q16.8 16 16.8 13.5 V3.2" fill="#e4e4e4" stroke="#555" stroke-width="1"/>
<path d="M3 6 Q9 8 15 6 V12.5 Q9 14.5 3 12.5 Z" fill="#2f73bd"/><path d="M9 7 V13.5" stroke="#e4e4e4" stroke-width="1.2"/><path d="M5 8 L7.5 9 V11 L5 10.5 M11 9 L13 8.5 V11 L11 11.5" fill="none" stroke="#dde8f5" stroke-width="0.8"/></svg>
<svg class="a" style="left:704px;top:63px" width="17" height="17" viewBox="0 0 17 17"><path d="M1 8 Q4 6 8 7 L16 5 V13 Q11 12.5 7 14 L1 16.5 Z" fill="#2f73bd" stroke="#1f5797" stroke-width="0.8"/>
<path d="M5 4 L10 1.5 L14.5 3 V9.5 L9.5 12 L5 10.5 Z" fill="#f2f2f2" stroke="#444" stroke-width="1"/><path d="M5 4 L9.5 5.5 L14.5 3 M9.5 5.5 V12" fill="none" stroke="#555" stroke-width="0.8"/></svg>
<svg class="a" style="left:704px;top:87px" width="17" height="17" viewBox="0 0 17 17"><path d="M1.4 3 H4.2 V5.8 H6.4 V9.8 H4.2 V12.6 H1.4 Z" fill="#2f73bd" stroke="#1f5797" stroke-width="1.1" stroke-linejoin="round"/>
<path d="M8.4 0.4 V15.8" stroke="#222" stroke-width="1.1"/>
<path d="M15.6 3 H12.8 V5.8 H10.6 V9.8 H12.8 V12.6 H15.6 Z" fill="#f4f4f4" stroke="#333" stroke-width="1.1" stroke-linejoin="round"/></svg>
<svg class="a" style="left:808px;top:41px" width="18" height="18" viewBox="0 0 18 18"><circle cx="3.5" cy="3.5" r="2.4" fill="#2f73bd" stroke="#1f5797" stroke-width="0.7"/>
<path d="M7 4.5 L16.5 2.5 V15.5 L7 17.2 Z" fill="#2f73bd" stroke="#1f5797" stroke-width="0.7"/><path d="M7 4.5 L11.5 3.6 V16.4 L7 17.2 Z" fill="#5a9ad8"/>
<path d="M11.5 1 V17.5" stroke="#888" stroke-width="1.1" stroke-dasharray="1.5 1"/></svg>
<svg class="a" style="left:863px;top:41px" width="19" height="18" viewBox="0 0 19 18"><path d="M2 2.5 Q5 0.5 5 4 Q3 8 3.5 12 Q5 16.5 9.5 16.2 Q13.5 15.8 13.5 11 Q13 7.5 11.5 4.5 Q12 1.5 17 2" fill="none" stroke="#3a7ac0" stroke-width="1.5" stroke-linecap="round"/></svg>
<svg class="a" style="left:921px;top:41px" width="18" height="18" viewBox="0 0 18 18"><path d="M5 4.5 L9 1 L17.5 7 L14 11 Z" fill="#f0c040" stroke="#b07818" stroke-width="0.8"/>
<path d="M8 3.5 L9 5 M10 4.8 L11 6.3 M12 6.2 L13 7.5 M14 7.6 L15 9" stroke="#8a5a10" stroke-width="0.7"/>
<path d="M1.5 6.5 L12.5 15" stroke="#2f6db5" stroke-width="2"/><path d="M9.5 16.8 L16.5 17 L14.5 11 Z" fill="#2f6db5"/></svg>
<svg class="a" style="left:12px;top:169px" width="17" height="17" viewBox="0 0 17 17"><path d="M0.8 7 L4.8 1.2 L9.8 2.4 V7.6 L16 10.2 V13.8 L9.6 16.4 L0.8 12 Z" fill="#f2c230" stroke="#8a6410" stroke-width="1.1" stroke-linejoin="round"/>
<path d="M0.8 7 L5.6 8.6 L9.8 7.6 M5.6 8.6 L10 10.8 L16 10.2 M10 10.8 V16.3 M4.8 1.2 L5.6 8.6" fill="none" stroke="#8a6410" stroke-width="0.8"/>
<path d="M10.4 11.2 L15.6 10.6 V13.5 L10.4 15.8 Z" fill="#e0a820"/><path d="M1.3 7.6 L5.3 9 V4 Z" fill="#f8dc70"/></svg>
<svg class="a" style="left:47px;top:169px" width="17" height="17" viewBox="0 0 17 17"><rect x="0.8" y="0.8" width="15.4" height="15.4" rx="1.5" fill="#f4f4f4" stroke="#555" stroke-width="1.2"/>
<rect x="1.2" y="1.2" width="14.6" height="2.8" fill="#3a78c0"/>
<rect x="2.8" y="5.5" width="3.6" height="2.4" fill="#3a78c0"/><rect x="2.8" y="9" width="3.6" height="2.4" fill="#3a78c0"/><rect x="2.8" y="12.4" width="3.6" height="2.4" fill="#3a78c0"/>
<path d="M7.5 6.7 H14 M7.5 10.2 H14 M7.5 13.6 H14" stroke="#444" stroke-width="1"/></svg>
<svg class="a" style="left:84px;top:168px" width="15" height="19" viewBox="0 0 15 19"><rect x="1.2" y="1.2" width="2.6" height="16.3" rx="1" fill="#f4f4f4" stroke="#333" stroke-width="1.1"/>
<path d="M3.8 5.5 H7.5 M3.8 14 H9" stroke="#333" stroke-width="1.6"/><path d="M3.8 5.5 H7.5 M3.8 14 H9" stroke="#f4f4f4" stroke-width="0.5"/>
<rect x="7.5" y="2.2" width="4.2" height="6.2" rx="0.8" fill="#f4f4f4" stroke="#333" stroke-width="1.1"/><rect x="9" y="10.6" width="4.6" height="6.4" rx="0.8" fill="#f8f8f8" stroke="#333" stroke-width="1.1"/></svg>
<svg class="a" style="left:119px;top:169px" width="17" height="17" viewBox="0 0 17 17"><circle cx="8.5" cy="8.5" r="5" fill="none" stroke="#222" stroke-width="1.8"/><path d="M8.5 0.5 V16.5 M0.5 8.5 H16.5" stroke="#222" stroke-width="1.6"/></svg>
<svg class="a" style="left:154px;top:168px" width="18" height="18" viewBox="0 0 18 18"><circle cx="9" cy="9" r="7.8" fill="#e8c030" stroke="#9a5a20" stroke-width="1"/>
<path d="M1.4 9.5 A7.6 7.6 0 0 1 7 1.6 L6.5 9.5 Z" fill="#2f74c0"/><path d="M7 1.6 L9.5 1.4 L11.5 9.6 H6.5 Z" fill="#e81c1c"/>
<path d="M1.4 9.5 A7.6 7.6 0 0 0 5 15.3 L6.5 9.5 Z" fill="#3a4a5a"/><path d="M6.5 9.6 H16.4 A7.6 7.6 0 0 1 5.5 15.8 Z" fill="#f0cc20"/>
<path d="M10.5 2.5 L15.5 9" stroke="#111" stroke-width="2.8" stroke-linecap="round"/><path d="M3 5 A7 7 0 0 1 5 3" stroke="#9cd0ff" stroke-width="1"/></svg>
<svg class="a" style="left:6px;top:193px" width="17" height="18" viewBox="0 0 17 18"><path d="M1 1.5 H16 V4 L10 10.5 V17 L7.5 15.5 V10.5 L1 4 Z" fill="#f0f0f0" stroke="#555" stroke-width="1"/><rect x="1" y="1.2" width="15" height="3" fill="#3a78c0"/></svg>
<svg class="a" style="left:4px;top:220px" width="17" height="17" viewBox="0 0 17 17"><path d="M0.8 7 L4.8 1.2 L9.8 2.4 V7.6 L16 10.2 V13.8 L9.6 16.4 L0.8 12 Z" fill="#f2c230" stroke="#8a6410" stroke-width="1.1" stroke-linejoin="round"/>
<path d="M0.8 7 L5.6 8.6 L9.8 7.6 M5.6 8.6 L10 10.8 L16 10.2 M10 10.8 V16.3 M4.8 1.2 L5.6 8.6" fill="none" stroke="#8a6410" stroke-width="0.8"/>
<path d="M10.4 11.2 L15.6 10.6 V13.5 L10.4 15.8 Z" fill="#e0a820"/><path d="M1.3 7.6 L5.3 9 V4 Z" fill="#f8dc70"/></svg>
<svg class="a" style="left:8px;top:246px" width="6" height="8" viewBox="0 0 6 8"><path d="M1 0.5 L5 4 L1 7.5 Z" fill="#707070"/></svg>
<svg class="a" style="left:8px;top:289.5px" width="6" height="8" viewBox="0 0 6 8"><path d="M1 0.5 L5 4 L1 7.5 Z" fill="#707070"/></svg>
<svg class="a" style="left:8px;top:311px" width="6" height="8" viewBox="0 0 6 8"><path d="M1 0.5 L5 4 L1 7.5 Z" fill="#707070"/></svg>
<svg class="a" style="left:8px;top:440px" width="6" height="8" viewBox="0 0 6 8"><path d="M1 0.5 L5 4 L1 7.5 Z" fill="#707070"/></svg>
<svg class="a" style="left:24px;top:243px" width="17" height="15" viewBox="0 0 17 15"><path d="M1 13.5 V1.5 Q1 0.8 1.8 0.8 H6.2 L8 3 H15 Q16 3 16 4 V13.5 Q16 14.2 15.2 14.2 H1.8 Q1 14.2 1 13.5 Z" fill="#f2f2f2" stroke="#383838" stroke-width="1.35"/>
<path d="M1.5 4.5 H15.5" stroke="#9a9a9a" stroke-width="0.8"/><path d="M11.5 6.5 A3.5 3.5 0 1 1 7.5 12" fill="none" stroke="#555" stroke-width="1"/><path d="M10 9.5 L12.5 11" stroke="#555" stroke-width="0.8"/><path d="M4 8.5 L8.5 10 L5 13 Z" fill="#3a7cc4"/></svg>
<svg class="a" style="left:24px;top:265px" width="17" height="15" viewBox="0 0 17 15"><path d="M1 13.5 V1.5 Q1 0.8 1.8 0.8 H6.2 L8 3 H15 Q16 3 16 4 V13.5 Q16 14.2 15.2 14.2 H1.8 Q1 14.2 1 13.5 Z" fill="#f2f2f2" stroke="#383838" stroke-width="1.35"/>
<path d="M1.5 4.5 H15.5" stroke="#9a9a9a" stroke-width="0.8"/><circle cx="8.5" cy="9.2" r="3.8" fill="#f8f8f8" stroke="#333" stroke-width="1.1"/><path d="M8.5 9.2 L11.6 11.6 A3.8 3.8 0 0 1 9 13 Z" fill="#e02020"/><path d="M8.5 9.2 L10.5 6.5" stroke="#3a7cc4" stroke-width="1"/></svg>
<svg class="a" style="left:24px;top:286px" width="17" height="15" viewBox="0 0 17 15"><path d="M1 13.5 V1.5 Q1 0.8 1.8 0.8 H6.2 L8 3 H15 Q16 3 16 4 V13.5 Q16 14.2 15.2 14.2 H1.8 Q1 14.2 1 13.5 Z" fill="#f2f2f2" stroke="#383838" stroke-width="1.35"/>
<path d="M1.5 4.5 H15.5" stroke="#9a9a9a" stroke-width="0.8"/><text x="8.5" y="13" text-anchor="middle" font-family="Liberation Serif" font-weight="700" font-size="10" fill="#2f6db5">A</text></svg>
<svg class="a" style="left:24px;top:308px" width="17" height="15" viewBox="0 0 17 15"><path d="M1 13.5 V1.5 Q1 0.8 1.8 0.8 H6.2 L8 3 H15 Q16 3 16 4 V13.5 Q16 14.2 15.2 14.2 H1.8 Q1 14.2 1 13.5 Z" fill="#f2f2f2" stroke="#383838" stroke-width="1.35"/>
<path d="M1.5 4.5 H15.5" stroke="#9a9a9a" stroke-width="0.8"/><path d="M5 7.5 L8.5 6 L12 7.5 V11.5 L8.5 13 L5 11.5 Z" fill="#2f6db5" stroke="#1a4a85" stroke-width="0.8"/><path d="M5 7.5 L8.5 9 L12 7.5 M8.5 9 V13" fill="none" stroke="#9cc6ee" stroke-width="0.7"/></svg>
<svg class="a" style="left:23px;top:327px" width="18" height="17" viewBox="0 0 18 17"><path d="M3 0.5 L5.3 2.5 L3 4.5 L0.7 2.5 Z" fill="#fff" stroke="#555" stroke-width="0.9"/><path d="M6.5 2.5 H16" stroke="#333" stroke-width="1.6"/>
<path d="M3 5.8 L5.3 7.8 L3 9.8 L0.7 7.8 Z" fill="#3a7cc4" stroke="#2a5a95" stroke-width="0.8"/><path d="M6.5 7.8 H16" stroke="#333" stroke-width="1.6"/>
<path d="M3 11 L5.3 13 L3 15 L0.7 13 Z" fill="#f0b020" stroke="#b07010" stroke-width="0.8"/><path d="M6.5 13 H10" stroke="#333" stroke-width="1.6"/>
<circle cx="13.5" cy="13" r="2.6" fill="#222"/><circle cx="13.5" cy="13" r="3.6" fill="none" stroke="#222" stroke-width="1.2" stroke-dasharray="1.4 1"/><circle cx="13.5" cy="13" r="1" fill="#f4f4f4"/></svg>
<svg class="a" style="left:26px;top:349px" width="14" height="17" viewBox="0 0 14 17"><path d="M1.5 4 L12 1 V13 L1.5 16 Z" fill="#fafafa" stroke="#3c3c3c" stroke-width="1.1" stroke-dasharray="5 1.2"/><path d="M6.8 0.5 V16.5" stroke="#3c3c3c" stroke-width="1.1" stroke-dasharray="2.5 1"/></svg>
<svg class="a" style="left:26px;top:371px" width="14" height="17" viewBox="0 0 14 17"><path d="M1.5 4 L12 1 V13 L1.5 16 Z" fill="#fafafa" stroke="#3c3c3c" stroke-width="1.1" stroke-dasharray="5 1.2"/><path d="M6.8 0.5 V16.5" stroke="#3c3c3c" stroke-width="1.1" stroke-dasharray="2.5 1"/></svg>
<svg class="a" style="left:26px;top:392px" width="14" height="17" viewBox="0 0 14 17"><path d="M1.5 4 L12 1 V13 L1.5 16 Z" fill="#fafafa" stroke="#3c3c3c" stroke-width="1.1" stroke-dasharray="5 1.2"/><path d="M6.8 0.5 V16.5" stroke="#3c3c3c" stroke-width="1.1" stroke-dasharray="2.5 1"/></svg>
<svg class="a" style="left:24px;top:413px" width="17" height="17" viewBox="0 0 17 17"><path d="M2.5 2 V14.5 H14" fill="none" stroke="#1a1a1a" stroke-width="1.5"/><path d="M2.5 0.5 L0.5 3.5 H4.5 Z M16 14.5 L13 12.5 V16.5 Z" fill="#1a1a1a"/></svg>
<svg class="a" style="left:24px;top:436px" width="17" height="16" viewBox="0 0 17 16"><path d="M6 2.5 L9.5 1 L15.5 4.2 V14 L12.5 15.3 L6 12 Z" fill="#f0f0f0" stroke="#3a3a3a" stroke-width="1"/>
<path d="M12.5 5.6 V15.3 M6 2.5 L12.5 5.6 L15.5 4.2" fill="none" stroke="#777" stroke-width="0.8"/>
<path d="M1 6 L5 4 L10.5 6.5 L6.5 8.5 Z" fill="#5a9ad8"/><path d="M1 6 L6.5 8.5 V14.5 L1 12 Z" fill="#2f73bd"/><path d="M6.5 8.5 L10.5 6.5 V12.3 L6.5 14.5 Z" fill="#1f5797"/></svg>
<svg class="a" style="left:1003px;top:119px" width="20" height="17" viewBox="0 0 20 17"><ellipse cx="10" cy="8" rx="8" ry="5" fill="#e4e4e4" opacity="0.8"/><circle cx="10" cy="6.5" r="4" fill="#6a6a6a"/><path d="M10 9 V15.5" stroke="#555" stroke-width="1.2"/><circle cx="9" cy="5.5" r="1.2" fill="#bbb"/></svg>
<svg class="a" style="left:740px;top:150px" width="200" height="150" viewBox="0 0 200 150"><defs>
<linearGradient id="lw" x1="0" y1="0" x2="1" y2="0.3"><stop offset="0" stop-color="#a9aab4"/><stop offset="0.5" stop-color="#8a8b98"/><stop offset="1" stop-color="#7b7c8a"/></linearGradient>
<radialGradient id="lws" cx="0.15" cy="0.55" r="0.6"><stop offset="0" stop-color="#c2c3ca"/><stop offset="1" stop-color="#c2c3ca" stop-opacity="0"/></radialGradient>
<linearGradient id="rf" x1="0" y1="0" x2="1" y2="0"><stop offset="0" stop-color="#7f808e"/><stop offset="0.6" stop-color="#8e8f9b"/><stop offset="1" stop-color="#878894"/></linearGradient>
</defs>
<g transform="translate(-740 -150)" stroke-linejoin="round">
<polygon points="757.7,174.9 801.2,160.9 920.3,167.6 876,181" fill="#eef0f4" stroke="#222" stroke-width="1"/>
<polygon points="876,181 920.3,167.6 921.5,277.4 876.4,291.6" fill="url(#rf)" stroke="#222" stroke-width="1"/>
<polygon points="757.7,174.9 876,181 876.4,291.6 758.1,285.5" fill="#474850" stroke="#222" stroke-width="1"/>
<polygon points="764.6,183 806.5,185 807.3,266 765,278.2" fill="url(#lw)"/>
<polygon points="764.6,183 806.5,185 807.3,266 765,278.2" fill="url(#lws)"/>
<polygon points="806.5,185 869.5,188 869.5,268 807.3,266" fill="#4e4f5b"/>
<polygon points="765,278.2 807.3,266 869.5,268 869.5,283.9" fill="#f1f3f7"/>
<polygon points="764.6,183 869.5,188 869.5,283.9 765,278.2" fill="none" stroke="#1e1e22" stroke-width="1.1"/>
<path d="M806.5 185 L807.3 266 L765 278.2 M807.3 266 L869.5 268" fill="none" stroke="#1e1e22" stroke-width="0.9"/>
</g></svg>
</body></html>
